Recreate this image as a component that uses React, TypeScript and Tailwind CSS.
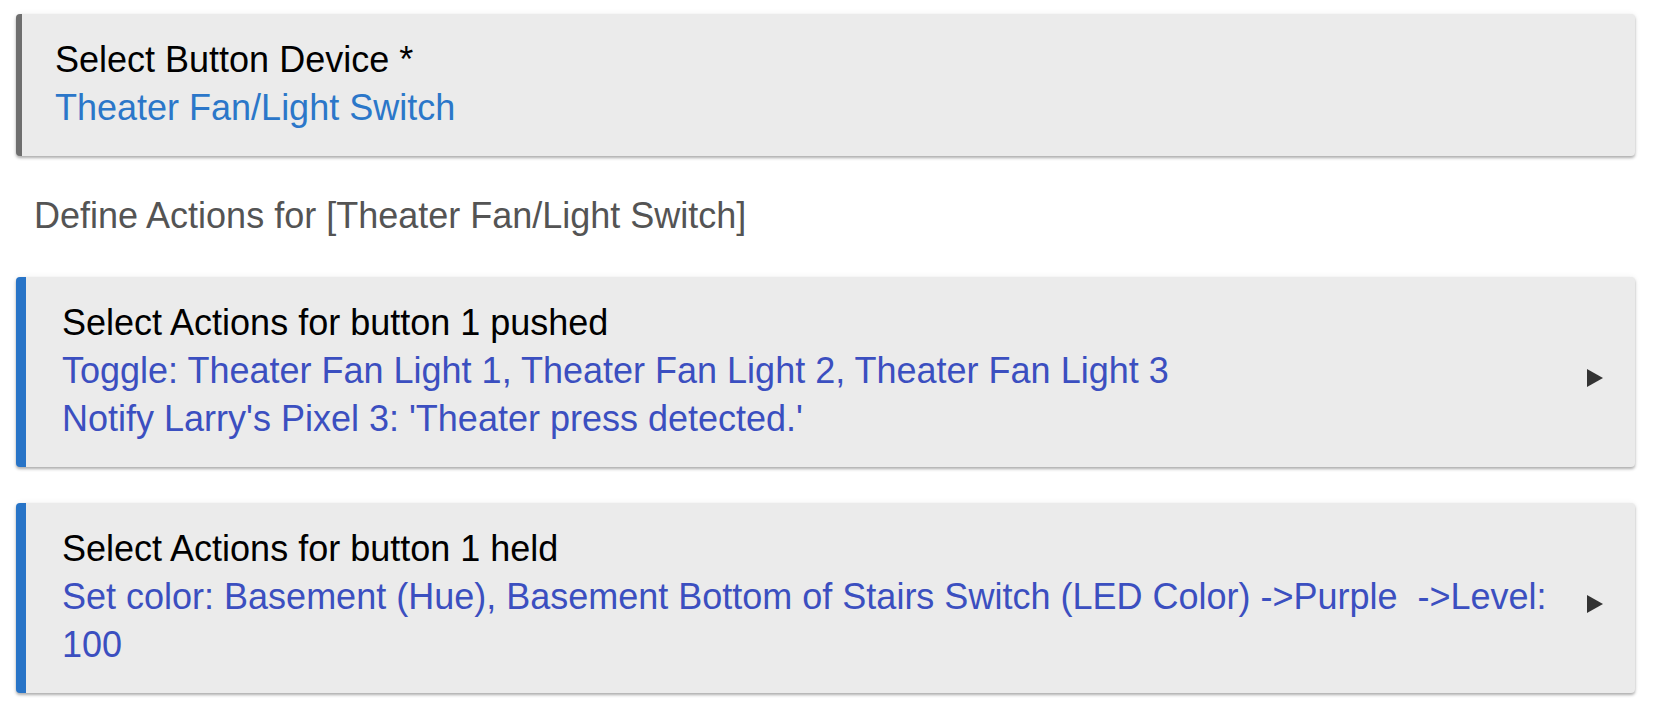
import type { FC, ReactNode } from 'react';

type CardProps = {
  title: string;
  lines: ReactNode[];
  accent: 'gray' | 'blue';
  arrow?: boolean;
};

const Card: FC<CardProps> = ({ title, lines, accent, arrow }) => {
  const border =
    accent === 'gray'
      ? 'border-l-[6px] border-[#6e6e6e] pl-[33px]'
      : 'border-l-[10px] border-[#2874c7] pl-[36px]';
  const valueColor = accent === 'gray' ? 'text-[#2b77c9]' : 'text-[#3b4fc0]';
  return (
    <div
      className={`flex items-center rounded-[4px] bg-[#ebebeb] pt-[22px] pb-[24px] pr-[32px] shadow-[0_2px_3px_rgba(0,0,0,0.3),0_0_6px_rgba(0,0,0,0.06)] ${border}`}
    >
      <div className="flex-1 pr-[24px]">
        <div className="text-black">{title}</div>
        {lines.map((line, idx) => (
          <div key={idx} className={valueColor}>
            {line}
          </div>
        ))}
      </div>
      {arrow && (
        <svg width="16" height="18" viewBox="0 0 16 18" className="mt-[14px] shrink-0">
          <path d="M0 0 L16 9 L0 18 Z" fill="#333333" />
        </svg>
      )}
    </div>
  );
};

export default function App() {
  return (
    <div
      className="min-h-screen bg-white pl-[16px] pr-[23px] pt-[14px] text-[36px] leading-[48px]"
      style={{ fontFamily: '"Liberation Sans", Arial, sans-serif' }}
    >
      <Card
        accent="gray"
        title="Select Button Device *"
        lines={['Theater Fan/Light Switch']}
      />
      <div className="pt-[36px] pb-[37px] pl-[18px] text-[#545454]">
        Define Actions for [Theater Fan/Light Switch]
      </div>
      <Card
        accent="blue"
        arrow
        title="Select Actions for button 1 pushed"
        lines={[
          'Toggle: Theater Fan Light 1, Theater Fan Light 2, Theater Fan Light 3',
          "Notify Larry's Pixel 3: 'Theater press detected.'",
        ]}
      />
      <div className="h-[36px]" />
      <Card
        accent="blue"
        arrow
        title="Select Actions for button 1 held"
        lines={[
          'Set color: Basement (Hue), Basement Bottom of Stairs Switch (LED Color) ->Purple\u00a0 ->Level: 100',
        ]}
      />
    </div>
  );
}
